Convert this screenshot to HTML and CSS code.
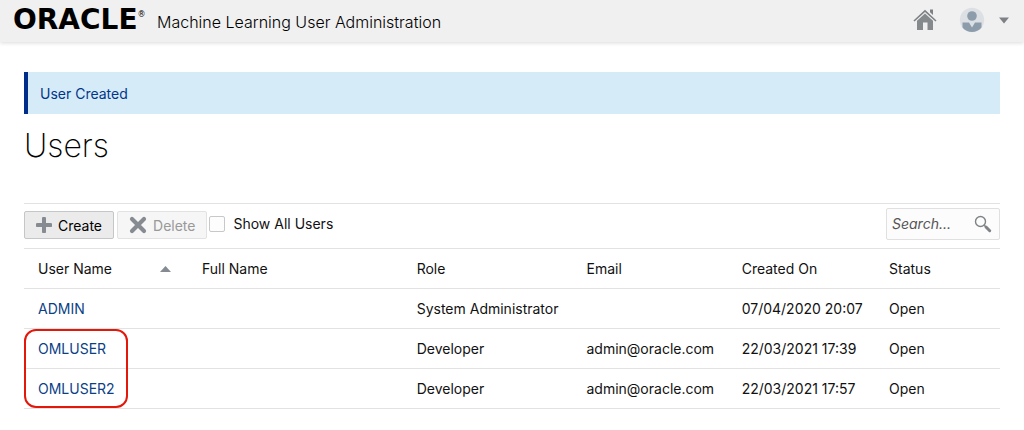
FILE: index.html
```html
<!DOCTYPE html>
<html lang="en">
<head>
<meta charset="utf-8">
<meta name="viewport" content="width=device-width, initial-scale=1">
<title>Oracle Machine Learning User Administration</title>
<link rel="stylesheet" href="styles.css">
</head>
<body>
<header class="topbar">
  <div class="brand">
    <span class="logo">ORACLE<sup class="mark">®</sup></span>
    <span class="product">Machine Learning User Administration</span>
  </div>
  <nav class="tools">
    <a class="tool" href="#" aria-label="Home">
      <svg width="24" height="22" viewBox="0 0 24 22">
        <path d="M1 12 12 1.800 23 12" fill="none" stroke="#7d8185" stroke-width="1.600"/>
        <path d="M17 .5h3v5.500l-3-2.800z" fill="#7d8185"/>
        <path d="M4 11.800 12 4.500l8 7.300V21h-5.500v-7.500h-4.500V21H4z" fill="#868a8d"/>
      </svg>
    </a>
    <button class="account" type="button" aria-label="Account menu">
      <svg width="26" height="26" viewBox="0 0 26 26">
        <circle cx="13" cy="13" r="12.200" fill="#dce0e4"/>
        <circle cx="13" cy="9" r="4.800" fill="#8d9cab"/>
        <path d="M3.500 15.500h6.500L13 20.500l3-5h6.500v5a12.200 12.200 0 0 1-19 0z" fill="#8d9cab"/>
      </svg>
      <svg width="10" height="7" viewBox="0 0 10 7"><path d="M0 .5h10L5 6.500z" fill="#7d8185"/></svg>
    </button>
  </nav>
</header>
<main class="page">
  <div class="notice" role="status">User Created</div>
  <h1 class="title">Users</h1>
  <div class="toolbar">
    <button class="btn" type="button">
      <svg width="16" height="16" viewBox="0 0 16 16"><path d="M8 1.500v13M1.500 8h13" stroke="#868b91" stroke-width="4" stroke-linecap="round"/></svg>
      Create
    </button>
    <button class="btn" type="button" disabled>
      <svg width="18" height="18" viewBox="0 0 18 18"><path d="M3 3l12 12M15 3L3 15" stroke="#868b91" stroke-width="4.200" stroke-linecap="round"/></svg>
      Delete
    </button>
    <label class="check"><input class="box" type="checkbox">Show All Users</label>
    <div class="search">
      <input class="field" type="text" placeholder="Search..." aria-label="Search">
      <svg width="18" height="18" viewBox="0 0 18 18"><circle cx="6.500" cy="6.500" r="5" fill="none" stroke="#7f8386" stroke-width="1.400"/><path d="M10.300 10.300 12 12" stroke="#7f8386" stroke-width="1.400"/><path d="M12 12l3.700 3.700" stroke="#7f8386" stroke-width="3" stroke-linecap="round"/></svg>
    </div>
  </div>
  <div class="listing">
    <table class="users">
      <thead>
        <tr>
          <th class="c-name"><div class="sort">User Name <svg width="11" height="6" viewBox="0 0 11 6"><path d="M0 6 5.500 0 11 6z" fill="#868b91"/></svg></div></th>
          <th class="c-full">Full Name</th>
          <th class="c-role">Role</th>
          <th class="c-mail">Email</th>
          <th class="c-date">Created On</th>
          <th>Status</th>
        </tr>
      </thead>
      <tbody>
        <tr><td><a class="user" href="#">ADMIN</a></td><td></td><td>System Administrator</td><td></td><td>07/04/2020 20:07</td><td>Open</td></tr>
        <tr><td><a class="user" href="#">OMLUSER</a></td><td></td><td>Developer</td><td>admin@oracle.com</td><td>22/03/2021 17:39</td><td>Open</td></tr>
        <tr><td><a class="user" href="#">OMLUSER2</a></td><td></td><td>Developer</td><td>admin@oracle.com</td><td>22/03/2021 17:57</td><td>Open</td></tr>
      </tbody>
    </table>
    <div class="highlight"></div>
  </div>
</main>
</body>
</html>
```
FILE: styles.css
```css
* { box-sizing: border-box; }
body {
  margin: 0;
  background: #fff;
  color: #111;
  font: 14px/20px Inter, "Liberation Sans", sans-serif;
}
svg { display: block; flex: none; }
button, input { font: inherit; color: inherit; }

.topbar {
  display: flex;
  justify-content: space-between;
  align-items: center;
  min-height: 42px;
  padding: 0 15px 2px 13px;
  background: #f0f0f0;
  box-shadow: 0 1px 4px rgba(0, 0, 0, .15);
}
.brand { display: flex; align-items: center; gap: 5px; }
.logo {
  display: flex;
  min-width: 139px;
  font: bold 28px/34px "DejaVu Sans", sans-serif;
  color: #000;
}
.mark { font-size: 8px; line-height: 16px; font-weight: normal; margin-top: 4px; }
.product { font-size: 16px; line-height: 24px; font-weight: 300; padding-top: 4px; color: #000; }
.tools { display: flex; align-items: center; gap: 22px; }
.account {
  display: flex;
  align-items: center;
  gap: 14px;
  padding: 0;
  border: 0;
  background: none;
}

.page { padding: 30px 24px 0; }
.notice {
  padding: 12px 12px 10px;
  border-left: 4px solid #002c8a;
  background: #d6ebf8;
  color: #003688;
}
.title { margin: 12px 0 37px; font-size: 32px; line-height: 40px; font-weight: 200; color: #000; }

.toolbar {
  display: flex;
  align-items: flex-start;
  padding: 4px 0 8px;
  border-top: 1px solid #e2e2e2;
}
.btn {
  display: flex;
  align-items: center;
  gap: 6px;
  margin: 3px 3px 0 0;
  padding: 4px 11px 2px;
  border: 1px solid #c4c6c8;
  border-radius: 2px;
  background: #ebebeb;
  color: #000;
}
.btn svg { margin-top: -2px; }
.btn:disabled { margin-right: 2px; border-color: #e2e2e2; background: #f6f6f6; color: #999; }
.check { display: flex; align-items: center; gap: 8px; margin-top: 6px; }
.box {
  appearance: none;
  width: 16px;
  height: 16px;
  margin: 0;
  border: 1px solid #c8c8c8;
  border-radius: 2px;
  background: #fdfdfd;
}
.search {
  display: flex;
  align-items: center;
  width: 114px;
  height: 32px;
  margin-left: auto;
  padding: 0 7px 0 5px;
  border: 1px solid #e0e0e0;
  border-radius: 2px;
  background: #fcfcfc;
}
.field { flex: 1; min-width: 0; padding: 0; border: 0; background: none; }
.field::placeholder { color: #555; font-style: italic; opacity: 1; }

.listing { position: relative; }
.users { width: 100%; table-layout: fixed; border-collapse: collapse; }
.users th, .users td {
  height: 40px;
  padding: 0 0 0 14px;
  border-top: 1px solid #e2e2e2;
  border-bottom: 1px solid #e2e2e2;
  text-align: left;
  font-weight: normal;
  white-space: nowrap;
}
.c-name { width: 16.8%; }
.c-full { width: 22%; }
.c-role { width: 17.4%; }
.c-mail { width: 15.9%; }
.c-date { width: 15.1%; }
.sort { display: flex; align-items: center; justify-content: space-between; padding-right: 17px; }
.user { color: #0b3f86; text-decoration: none; }
.highlight {
  position: absolute;
  left: 0;
  bottom: 1px;
  width: 104px;
  height: 79px;
  border: 2px solid #e3170a;
  border-radius: 12px;
  pointer-events: none;
}
```
